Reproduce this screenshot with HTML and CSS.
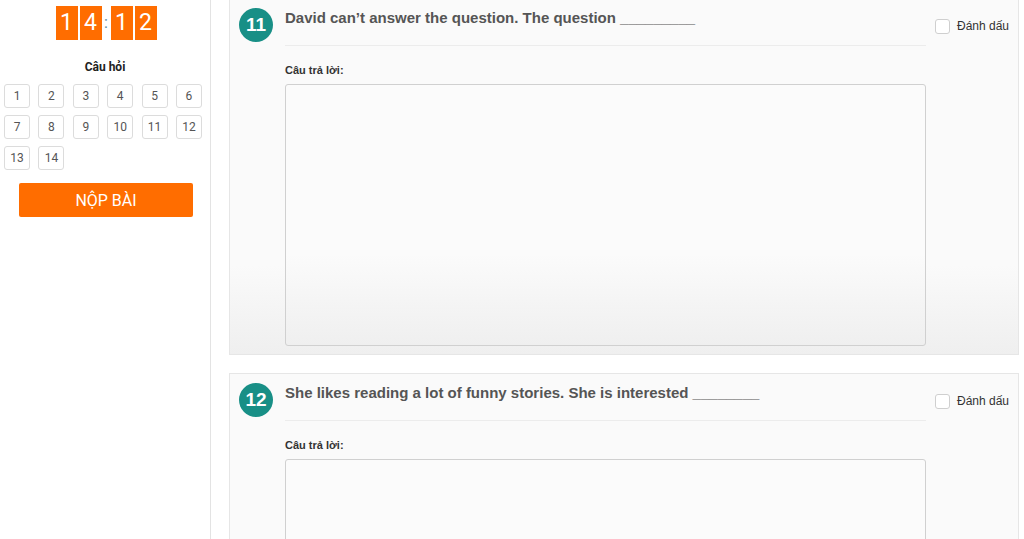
FILE: index.html
```html
<!DOCTYPE html>
<html lang="vi">
<head>
    <meta charset="UTF-8">
    <meta name="viewport" content="width=device-width, initial-scale=1.0">
    <title>Làm bài thi</title>
    <link rel="stylesheet" href="styles.css">
</head>
<body>

<div class="page">
    <aside class="sidebar">
        <div class="timer">
            <span class="digit">1</span>
            <span class="digit">4</span>
            <span class="colon">:</span>
            <span class="digit">1</span>
            <span class="digit">2</span>
        </div>

        <div class="sidebar-title">Câu hỏi</div>
        <div class="question-nav">
            <a href="#" class="nav-item">1</a>
            <a href="#" class="nav-item">2</a>
            <a href="#" class="nav-item">3</a>
            <a href="#" class="nav-item">4</a>
            <a href="#" class="nav-item">5</a>
            <a href="#" class="nav-item">6</a>
            <a href="#" class="nav-item">7</a>
            <a href="#" class="nav-item">8</a>
            <a href="#" class="nav-item">9</a>
            <a href="#" class="nav-item">10</a>
            <a href="#" class="nav-item">11</a>
            <a href="#" class="nav-item">12</a>
            <a href="#" class="nav-item">13</a>
            <a href="#" class="nav-item">14</a>
        </div>

        <button type="button" class="submit-btn">NỘP BÀI</button>
    </aside>

    <main class="content">
        <div class="question active">
            <div class="badge">11</div>
            <div class="question-body">
                <div class="question-text">David can’t answer the question. The question _________</div>
                <label class="answer-label" for="answer11">Câu trả lời:</label>
                <textarea id="answer11" class="answer-box"></textarea>
            </div>
            <label class="mark">
                <span class="checkbox"></span>
                Đánh dấu
            </label>
        </div>

        <div class="question">
            <div class="badge">12</div>
            <div class="question-body">
                <div class="question-text">She likes reading a lot of funny stories. She is interested ________</div>
                <label class="answer-label" for="answer12">Câu trả lời:</label>
                <textarea id="answer12" class="answer-box"></textarea>
            </div>
            <label class="mark">
                <span class="checkbox"></span>
                Đánh dấu
            </label>
        </div>
    </main>
</div>

</body>
</html>
```

FILE: styles.css
```css
body {
    margin: 0;
    font-family: 'Liberation Sans', Arial, sans-serif;
    background-color: #fff;
    color: #333;
    overflow: hidden;
}

.page {
    display: flex;
    align-items: flex-start;
    height: 539px;
}

/* cot trai */
.sidebar {
    width: 211px;
    height: 100%;
    border-right: 1px solid #e3e3e3;
    box-sizing: border-box;
    font-family: 'Roboto', 'Liberation Sans', sans-serif;
    flex-shrink: 0;
}

.timer {
    display: flex;
    justify-content: center;
    align-items: center;
    gap: 2px;
    margin-top: 6px;
    padding-left: 2px;
}

.digit {
    width: 22px;
    height: 34px;
    background-color: #ff6d00;
    color: #fff;
    font-size: 23px;
    line-height: 34px;
    text-align: center;
}

.colon {
    width: 5px;
    color: #5f8c9a;
    font-size: 16px;
    line-height: 34px;
    text-align: center;
}

.sidebar-title {
    margin-top: 20px;
    text-align: center;
    font-size: 12px;
    font-weight: bold;
    color: #222;
}

.question-nav {
    display: grid;
    grid-template-columns: repeat(6, 26px);
    column-gap: 8.4px;
    row-gap: 7px;
    padding-left: 4px;
    margin-top: 10px;
}

.nav-item {
    display: block;
    height: 24px;
    border: 1px solid #dcdcdc;
    border-radius: 3px;
    box-sizing: border-box;
    font-size: 12px;
    line-height: 22px;
    text-align: center;
    color: #555;
    text-decoration: none;
}

.submit-btn {
    display: block;
    width: 174px;
    height: 34px;
    margin: 13px 0 0 19px;
    border: none;
    border-radius: 2px;
    background-color: #ff6d00;
    color: #fff;
    font-family: 'Roboto', 'Liberation Sans', sans-serif;
    font-size: 16px;
    cursor: pointer;
}

/* noi dung cau hoi */
.content {
    flex: 1;
    padding: 0 4px 0 18px;
    margin-top: -2px;
}

.question {
    display: flex;
    width: 790px;
    box-sizing: border-box;
    padding: 9px 0 8px 9px;
    margin-bottom: 18px;
    border: 1px solid #e6e6e6;
    background-color: #fafafa;
}

.question.active {
    background: linear-gradient(to bottom, #fafafa 0%, #fafafa 75%, #efefef 100%);
}

.badge {
    width: 34px;
    height: 34px;
    border-radius: 50%;
    background-color: #188f86;
    color: #fff;
    font-size: 19px;
    font-weight: bold;
    line-height: 34px;
    text-align: center;
    flex-shrink: 0;
}

.question-body {
    width: 641px;
    margin-left: 12px;
}

.question-text {
    font-size: 15px;
    font-weight: bold;
    color: #555;
    line-height: 20px;
    padding-bottom: 17px;
    border-bottom: 1px solid #ececec;
}

.answer-label {
    display: block;
    margin-top: 18px;
    font-size: 11px;
    font-weight: bold;
    color: #333;
}

.answer-box {
    display: block;
    width: 100%;
    height: 262px;
    margin-top: 8px;
    box-sizing: border-box;
    border: 1px solid #d0d0d0;
    border-radius: 3px;
    background-color: #fbfbfb;
    resize: none;
}

.question.active .answer-box {
    background: linear-gradient(to bottom, #fbfbfb 0%, #fbfbfb 65%, #efefef 100%);
}

.mark {
    display: flex;
    align-items: center;
    gap: 7px;
    margin: 10px 0 0 9px;
    height: 16px;
    font-size: 12px;
    color: #333;
    white-space: nowrap;
}

.checkbox {
    width: 15px;
    height: 15px;
    border: 1px solid #cfcfcf;
    border-radius: 3px;
    box-sizing: border-box;
    background-color: #fff;
}
```
